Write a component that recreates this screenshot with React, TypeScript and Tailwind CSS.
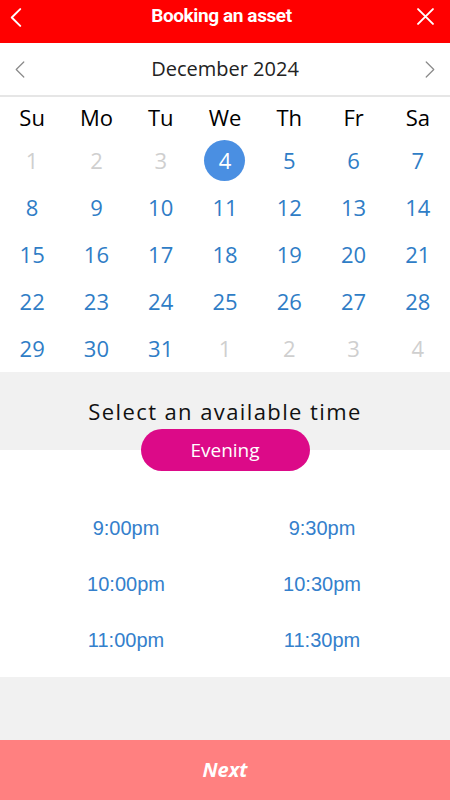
import React from 'react';

type Day = { n: number; muted?: boolean; selected?: boolean };

const weekdays = ['Su', 'Mo', 'Tu', 'We', 'Th', 'Fr', 'Sa'];

const buildDays = (): Day[] => {
  const days: Day[] = [1, 2, 3].map((n) => ({ n, muted: true }));
  for (let n = 4; n <= 31; n++) days.push({ n, selected: n === 4 });
  [1, 2, 3, 4].forEach((n) => days.push({ n, muted: true }));
  return days;
};

const times = ['9:00pm', '9:30pm', '10:00pm', '10:30pm', '11:00pm', '11:30pm'];

const Chevron: React.FC<{ dir: 'left' | 'right'; className?: string; stroke?: number }> = ({ dir, className, stroke = 1.5 }) => (
  <svg className={className} viewBox="0 0 10 18" fill="none" stroke="currentColor" strokeWidth={stroke} strokeLinecap="round" strokeLinejoin="round">
    {dir === 'left' ? <path d="M9 1 1 9l8 8" /> : <path d="M1 1l8 8-8 8" />}
  </svg>
);

export default function App() {
  const days = buildDays();

  return (
    <div className="w-[450px] h-[800px] flex flex-col bg-white font-['Open_Sans',sans-serif] overflow-hidden">
      {/* Header */}
      <div className="h-[43px] shrink-0 bg-[#ff0000] flex items-center justify-between px-[10px] text-white">
        <Chevron dir="left" className="w-[12px] h-[19px] -mt-[9px]" stroke={1.8} />
        <h1 className="font-['Roboto',sans-serif] font-bold text-[19px] tracking-[-0.4px] -mt-[10px] ml-[4px]">Booking an asset</h1>
        <svg className="w-[17px] h-[17px] -mt-[11px] mr-[6px]" viewBox="0 0 16 16" fill="none" stroke="currentColor" strokeWidth={1.8} strokeLinecap="round">
          <path d="M1 1l14 14M15 1 1 15" />
        </svg>
      </div>

      {/* Month switcher */}
      <div className="h-[52px] shrink-0 flex items-center justify-between px-[15px] border-b-2 border-[#e6e6e6] box-content">
        <Chevron dir="left" className="w-[10px] h-[17px] text-[#8a8a8a]" stroke={1.3} />
        <span className="text-[20px] text-[#222]">December 2024</span>
        <Chevron dir="right" className="w-[10px] h-[17px] text-[#8a8a8a]" stroke={1.3} />
      </div>

      {/* Calendar */}
      <div className="grid grid-cols-7 h-[40px] shrink-0 items-center">
        {weekdays.map((d) => (
          <span key={d} className="text-center text-[22px] text-black leading-none">{d}</span>
        ))}
      </div>
      <div className="grid grid-cols-7 auto-rows-[47px] shrink-0">
        {days.map((d, i) => (
          <div key={i} className="flex items-center justify-center">
            {d.selected ? (
              <span className="w-[41px] h-[41px] rounded-full bg-[#4a8fe2] text-white text-[22px] flex items-center justify-center">{d.n}</span>
            ) : (
              <span className={`text-[22px] ${d.muted ? 'text-[#cfcfcf]' : 'text-[#2f7dc6]'}`}>{d.n}</span>
            )}
          </div>
        ))}
      </div>

      {/* Time section */}
      <div className="h-[78px] shrink-0 bg-[#f1f1f1] flex flex-col items-center pt-[24px]">
        <p className="text-[22px] leading-[30px] tracking-[1.4px] text-[#111]">Select an available time</p>
        <div className="mt-[3px] w-[169px] h-[42px] shrink-0 rounded-full bg-[#dc0a88] text-white text-[19px] flex items-center justify-center relative z-10">
          Evening
        </div>
      </div>

      <div className="h-[227px] shrink-0 bg-white pt-[50px] pl-[28px] pr-[30px] grid grid-cols-2 auto-rows-[56px] content-start">
        {times.map((t) => (
          <div key={t} className="flex items-center justify-center font-['Liberation_Sans',Arial,sans-serif] text-[20px] text-[#3480cc]">
            {t}
          </div>
        ))}
      </div>

      <div className="h-[63px] shrink-0 bg-[#f1f1f1]" />

      <button className="h-[60px] shrink-0 bg-[#ff8080] text-white text-[20px] font-bold italic flex items-center justify-center">
        Next
      </button>
    </div>
  );
}
